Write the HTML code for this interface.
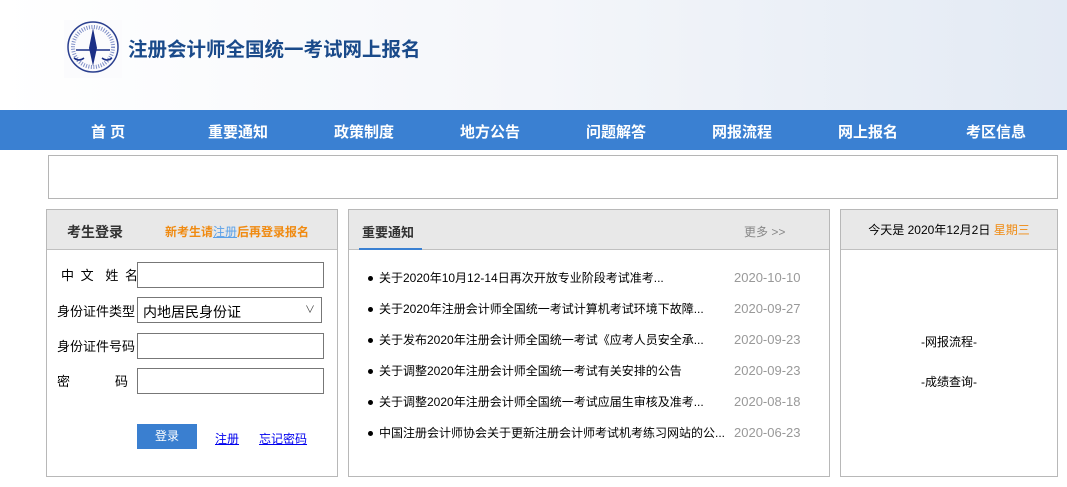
<!DOCTYPE html>
<html><head><meta charset="utf-8"><style>
*{margin:0;padding:0;box-sizing:border-box}
body{width:1067px;height:487px;overflow:hidden;background:#fff;font-family:"Liberation Sans","Noto Sans CJK SC",sans-serif;font-size:13px;color:#000;position:relative}
.hd{position:absolute;left:0;top:0;width:1067px;height:110px;background:linear-gradient(90deg,#fff 0%,#f4f6fa 50%,#e3eaf4 100%)}
.logo{position:absolute;left:64px;top:20px;width:58px;height:58px}
.title{position:absolute;left:128px;top:38px;font-size:19.5px;font-weight:bold;color:#1a4a8a;line-height:24px}
.nav{position:absolute;left:0;top:110px;width:1067px;height:40px;background:#3a80d2}
.nav span{position:absolute;top:11px;color:#fff;font-size:15px;font-weight:bold}
.ban{position:absolute;left:48px;top:155px;width:1010px;height:44px;border:1px solid #b5b5b5}
.p{position:absolute;top:209px;height:268px;border:1px solid #b8b8b8}
.ph{height:40px;background:#e8e8e8;border-bottom:1px solid #c0c0c0;position:relative}
.lab{position:absolute;left:10px;font-size:13px;line-height:16px}
.inp{position:absolute;left:90px;width:187px;height:26px;border:1px solid #777;background:#fff}
.li{position:absolute;left:20px;font-size:12px;line-height:16px;height:16px;width:450px}
.li:before{content:"";position:absolute;left:-1px;top:6px;width:5px;height:5px;border-radius:50%;background:#000}
.li b{font-weight:normal;position:absolute;left:10px;top:0;white-space:nowrap}
.li i{font-style:normal;position:absolute;left:365px;top:0;color:#999;font-size:13px;white-space:nowrap}
</style></head><body>
<div class="hd">
<svg class="logo" viewBox="0 0 58 58"><rect width="58" height="58" fill="#fbfbfd"/><circle cx="29" cy="27" r="25" fill="none" stroke="#2a3f8f" stroke-width="1.5"/><circle cx="29" cy="27" r="20" fill="none" stroke="#8090c8" stroke-width="4" stroke-dasharray="1 1.5"/><path d="M29 8 L33 28 L29 46 L25 28Z" fill="#1b2f86"/><path d="M12 30 H46" stroke="#1b2f86" stroke-width="1.5"/><path d="M10 38 Q15 42 20 38 M38 38 Q43 42 48 38" stroke="#1b2f86" fill="none" stroke-width="1.5"/></svg>
<div class="title">注册会计师全国统一考试网上报名</div>
</div>
<div class="nav">
<span style="left:91px">首 页</span><span style="left:208px">重要通知</span><span style="left:334px">政策制度</span><span style="left:460px">地方公告</span><span style="left:586px">问题解答</span><span style="left:712px">网报流程</span><span style="left:838px">网上报名</span><span style="left:966px">考区信息</span>
</div>
<div class="ban"></div>

<div class="p" style="left:46px;width:292px">
<div class="ph"><span style="position:absolute;left:20px;top:12px;font-size:14px;font-weight:bold;color:#333">考生登录</span><span style="position:absolute;left:118px;top:13px;font-size:12px;font-weight:bold;color:#f08a10">新考生请<u style="color:#5aa0e8;font-weight:normal">注册</u>后再登录报名</span></div>
<span class="lab" style="top:58px;left:14px;letter-spacing:1.5px">中 文&nbsp;&nbsp;姓 名</span><div class="inp" style="top:52px"></div>
<span class="lab" style="top:94px">身份证件类型</span><div class="inp" style="top:87px;width:185px;font-size:14px;padding:4px 5px">内地居民身份证<span style="position:absolute;right:6px;top:3px;font-size:10px;color:#444">∨</span></div>
<span class="lab" style="top:129px">身份证件号码</span><div class="inp" style="top:123px"></div>
<span class="lab" style="top:164px">密<span style="display:inline-block;width:45px"></span>码</span><div class="inp" style="top:158px"></div>
<div style="position:absolute;left:90px;top:214px;width:60px;height:25px;background:#3a7fd0;color:#fff;font-size:12px;text-align:center;line-height:25px">登录</div>
<u style="position:absolute;left:168px;top:220px;color:#00e;font-size:12px">注册</u>
<u style="position:absolute;left:212px;top:220px;color:#00e;font-size:12px">忘记密码</u>
</div>

<div class="p" style="left:348px;width:482px">
<div class="ph"><span style="position:absolute;left:13px;top:12px;font-size:13px;font-weight:bold;color:#333">重要通知</span><div style="position:absolute;left:10px;bottom:-1px;width:63px;height:2px;background:#3a80d2"></div><span style="position:absolute;left:395px;top:13px;font-size:12px;color:#888">更多 &gt;&gt;</span></div>
<div class="li" style="top:60px"><b>关于2020年10月12-14日再次开放专业阶段考试准考...</b><i>2020-10-10</i></div>
<div class="li" style="top:91px"><b>关于2020年注册会计师全国统一考试计算机考试环境下故障...</b><i>2020-09-27</i></div>
<div class="li" style="top:122px"><b>关于发布2020年注册会计师全国统一考试《应考人员安全承...</b><i>2020-09-23</i></div>
<div class="li" style="top:153px"><b>关于调整2020年注册会计师全国统一考试有关安排的公告</b><i>2020-09-23</i></div>
<div class="li" style="top:184px"><b>关于调整2020年注册会计师全国统一考试应届生审核及准考...</b><i>2020-08-18</i></div>
<div class="li" style="top:215px"><b>中国注册会计师协会关于更新注册会计师考试机考练习网站的公...</b><i>2020-06-23</i></div>
</div>

<div class="p" style="left:840px;width:218px">
<div class="ph" style="text-align:center;line-height:40px;font-size:12px">今天是 2020年12月2日 <span style="color:#f08a10">星期三</span></div>
<div style="position:absolute;left:0;width:100%;top:123px;text-align:center;font-size:12px">-网报流程-</div>
<div style="position:absolute;left:0;width:100%;top:163px;text-align:center;font-size:12px">-成绩查询-</div>
</div>
</body></html>
